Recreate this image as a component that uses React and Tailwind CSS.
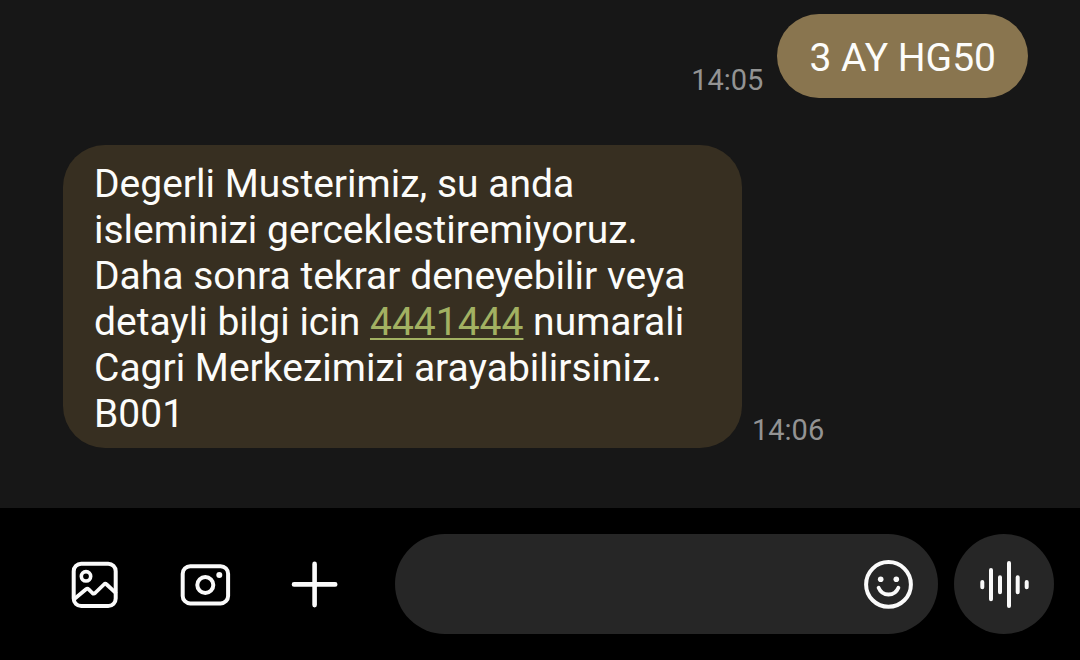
import { useState } from "react";

const messages = [
  { id: 1, mine: true, time: "14:05", text: "3 AY HG50" },
  {
    id: 2,
    mine: false,
    time: "14:06",
    text: (
      <>
        Degerli Musterimiz, su anda isleminizi gerceklestiremiyoruz. Daha sonra
        tekrar deneyebilir veya detayli bilgi icin{" "}
        <a
          href="tel:4441444"
          className="text-[#a2b162] underline decoration-2 underline-offset-3"
        >
          4441444
        </a>{" "}
        numarali Cagri Merkezimizi arayabilirsiniz. B001
      </>
    ),
  },
];

function Icon({ children }) {
  return (
    <svg
      viewBox="0 0 50 50"
      fill="none"
      stroke="currentColor"
      strokeWidth="4"
      strokeLinecap="round"
      strokeLinejoin="round"
      aria-hidden="true"
      className="h-[50px] w-[50px] overflow-visible"
    >
      {children}
    </svg>
  );
}

function GalleryIcon() {
  return (
    <Icon>
      <rect x="3.7" y="4.7" width="42" height="42.3" rx="7.5" />
      <circle cx="16" cy="17.3" r="4.7" strokeWidth="3.6" />
      <path
        d="M4 40.3 16 30.3q1.4-1.1 2.7.1l3.7 3.6q1.3 1.2 2.7 0l8.8-8.5q1.4-1.3 2.8 0l8.7 8.2"
        strokeWidth="3.8"
      />
    </Icon>
  );
}

function CameraIcon() {
  return (
    <Icon>
      <rect x="2.7" y="7.2" width="45.4" height="37.2" rx="7.5" />
      <circle cx="25.3" cy="26" r="8" />
      <circle cx="39.3" cy="15.9" r="3" fill="currentColor" stroke="none" />
    </Icon>
  );
}

function PlusIcon() {
  return (
    <Icon>
      <path d="M24.6 4.9v41.2M4 25.4h41.2" strokeWidth="4.6" />
    </Icon>
  );
}

function SmileIcon() {
  return (
    <Icon>
      <circle cx="24.5" cy="25.4" r="22.4" />
      <circle cx="16.7" cy="20.3" r="2.8" fill="currentColor" stroke="none" />
      <circle cx="32.3" cy="20.3" r="2.8" fill="currentColor" stroke="none" />
      <path d="M14.6 28.8c1.8 4.3 5.6 6.7 9.9 6.7s8.1-2.4 9.9-6.7" strokeWidth="3.8" />
    </Icon>
  );
}

function VoiceIcon() {
  return (
    <Icon>
      <path d="M3.3 23v5.2M12 11v29.2M21 18.2v15M30 4v43M38.7 18.2v15M47.7 23v5.2" />
    </Icon>
  );
}

function Message({ mine, time, text }) {
  return (
    <div
      className={`flex items-end ${
        mine ? "flex-row-reverse gap-[14px]" : "gap-[10px]"
      }`}
    >
      <p
        className={`max-w-[679px] rounded-[42px] text-[39px] leading-[46px] text-[#fcfcfa] ${
          mine
            ? "bg-[#89754f] px-8 pt-[21px] pb-[17px]"
            : "bg-[#372f21] px-[31px] pt-4 pb-[11px]"
        }`}
      >
        {text}
      </p>
      <time className="text-[29px] leading-[36px] text-[#939393]">{time}</time>
    </div>
  );
}

export default function App() {
  const [draft, setDraft] = useState("");

  return (
    <div className="flex min-h-screen flex-col bg-[#171717] font-[Roboto,sans-serif]">
      <main className="flex flex-1 flex-col gap-[47px] pt-[14px] pr-[52px] pb-[60px] pl-[63px]">
        {messages.map((message) => (
          <Message key={message.id} {...message} />
        ))}
      </main>

      <form
        onSubmit={(e) => e.preventDefault()}
        className="flex items-center bg-black py-[26px] pr-[26px] pl-[70px] text-[#fafafa]"
      >
        <div className="flex gap-[60px]">
          <button type="button" aria-label="Galeri">
            <GalleryIcon />
          </button>
          <button type="button" aria-label="Kamera">
            <CameraIcon />
          </button>
          <button type="button" aria-label="Ekle">
            <PlusIcon />
          </button>
        </div>

        <div className="ml-[55px] flex h-[100px] min-w-0 flex-1 items-center rounded-full bg-[#262626] pr-6 pl-10">
          <input
            type="text"
            aria-label="Mesaj"
            value={draft}
            onChange={(e) => setDraft(e.target.value)}
            className="min-w-0 flex-1 bg-transparent text-[39px] outline-none"
          />
          <button type="button" aria-label="Emoji">
            <SmileIcon />
          </button>
        </div>

        <button
          type="button"
          aria-label="Sesli mesaj"
          className="ml-4 grid h-[100px] w-[100px] shrink-0 place-items-center rounded-full bg-[#262626]"
        >
          <VoiceIcon />
        </button>
      </form>
    </div>
  );
}
